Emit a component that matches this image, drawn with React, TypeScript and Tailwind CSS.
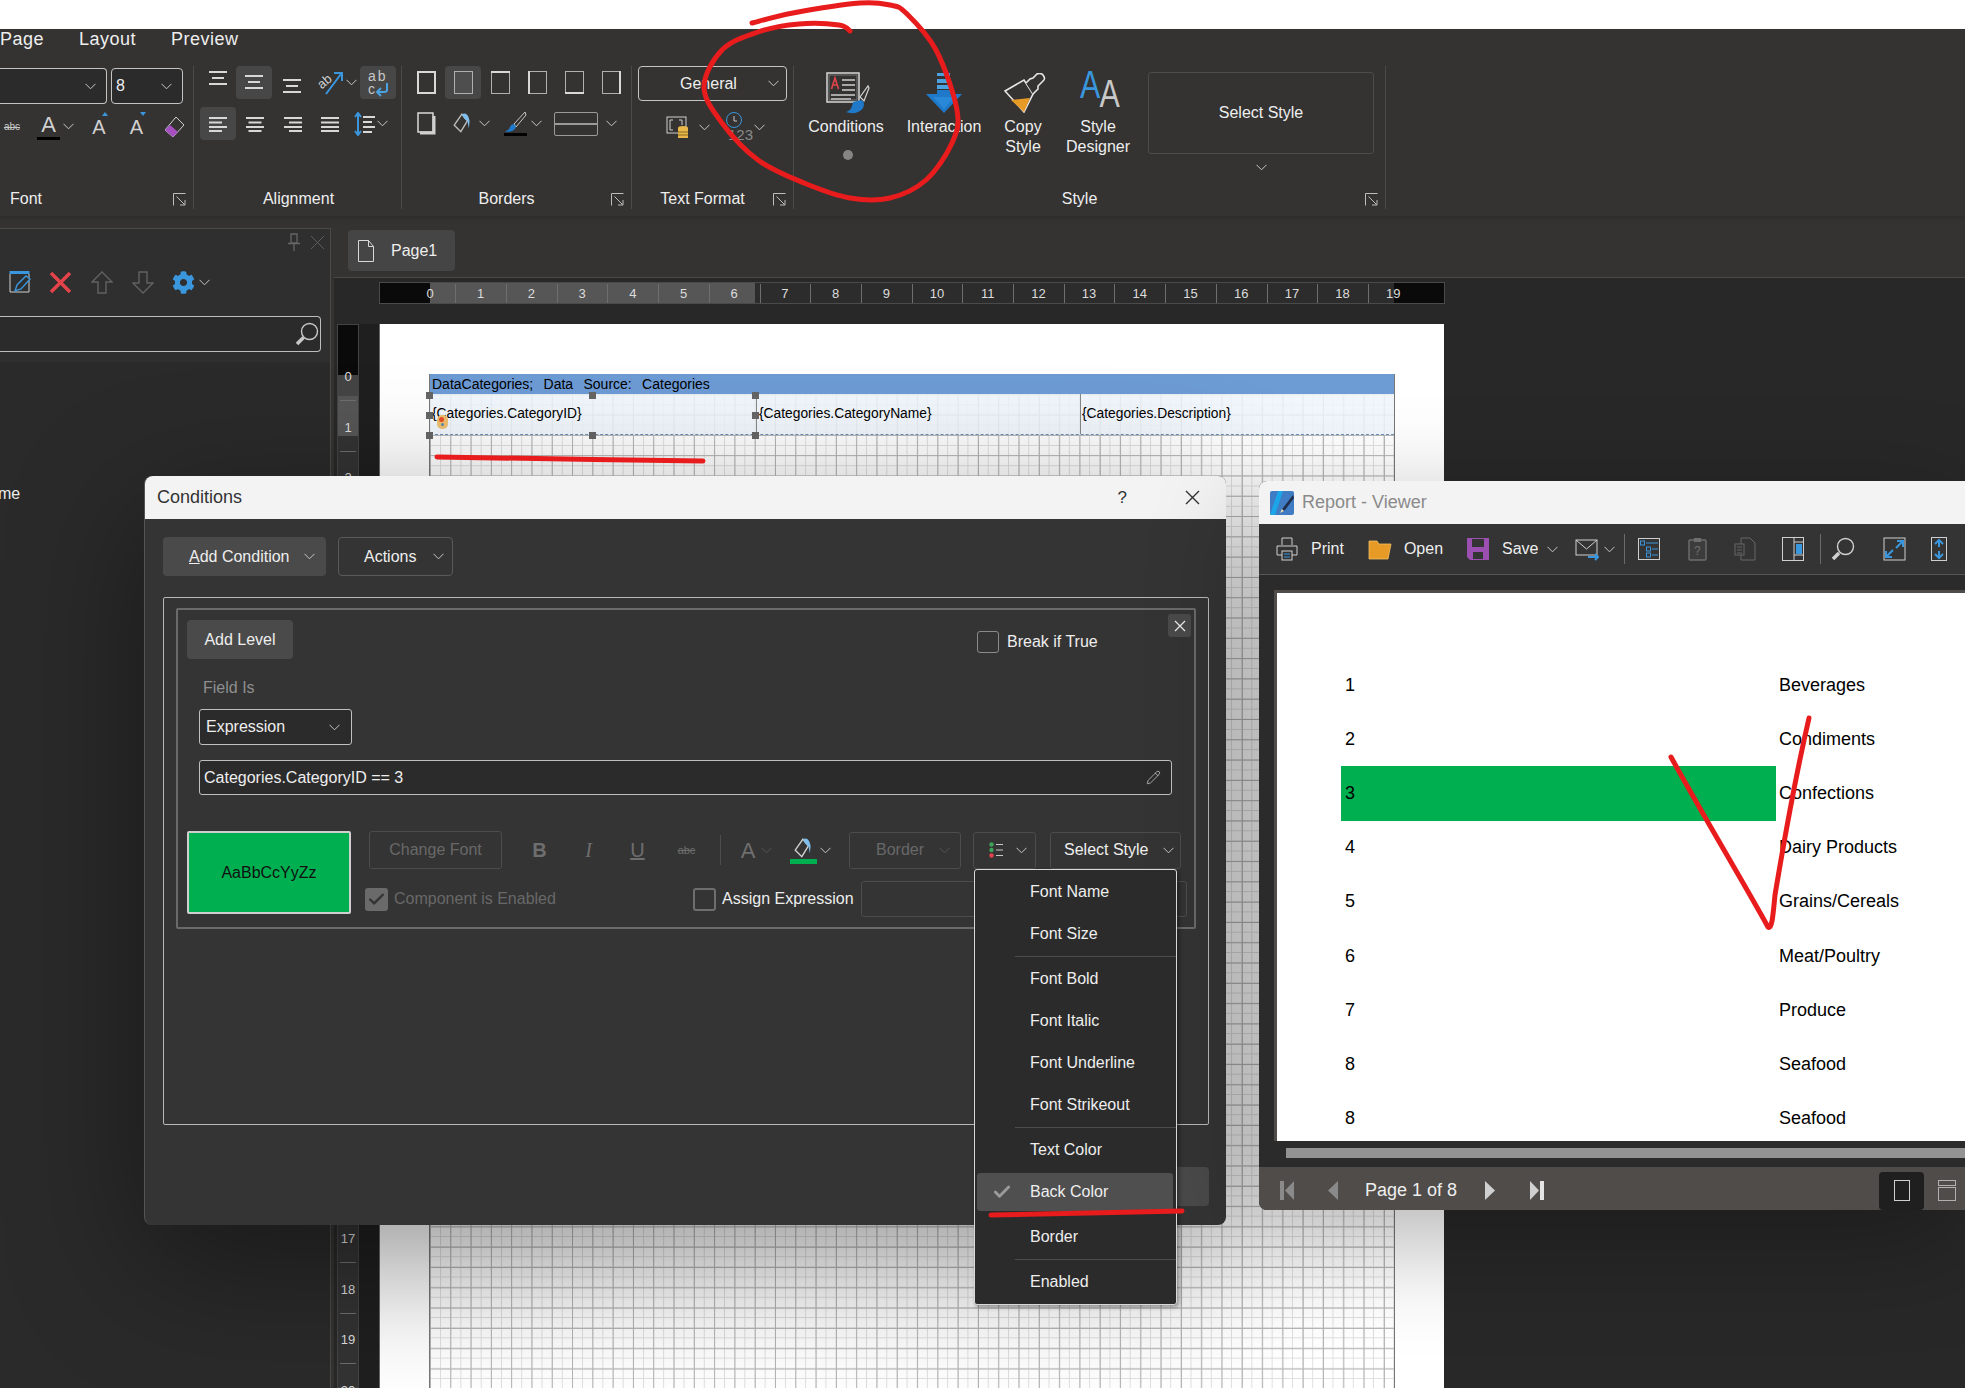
import React from 'react';
import { FaCog } from 'react-icons/fa';
import { Check, Pencil } from 'lucide-react';

const Chev = ({ c = '#c8c8c8', className = '' }: { c?: string; className?: string }) => (
  <svg width="11" height="7" viewBox="0 0 11 7" className={`shrink-0 ${className}`}>
    <path d="M0.5 0.8l5 5 5-5" fill="none" stroke={c} strokeWidth="1" />
  </svg>
);

const Launcher = () => (
  <svg width="13" height="13" viewBox="0 0 13 13" className="shrink-0">
    <path d="M0.5 12.5V0.5H12.5" fill="none" stroke="#bdbdbd" />
    <path d="M3.5 3.5l8 8M7 12h5V7" fill="none" stroke="#bdbdbd" />
  </svg>
);

const VAlign = ({ y }: { y: number }) => (
  <svg width="18" height="33" viewBox="0 0 18 33">
    <rect x="0" y={y} width="18" height="2" fill="#d8d8d8" />
    <rect x="3" y={y + 6} width="12" height="2" fill="#d8d8d8" />
    <rect x="0" y={y + 12} width="18" height="2" fill="#d8d8d8" />
  </svg>
);

const HAlign = ({ kind }: { kind: 'l' | 'c' | 'r' | 'j' }) => {
  const w = kind === 'j' ? 18 : 13;
  const x = kind === 'l' || kind === 'j' ? 0 : kind === 'c' ? 2.5 : 5;
  return (
    <svg width="18" height="16" viewBox="0 0 18 16">
      <rect x="0" y="1" width="18" height="2" fill="#d8d8d8" />
      <rect x={x} y="5.5" width={w} height="2" fill="#d8d8d8" />
      <rect x="0" y="10" width="18" height="2" fill="#d8d8d8" />
      <rect x={x} y="14" width={w} height="2" fill="#d8d8d8" />
    </svg>
  );
};

const BorderBox = ({ side }: { side: 'all' | 'none' | 't' | 'l' | 'b' | 'r' }) => {
  const strong = '#d8d8d8';
  const weak = '#b0b0b0';
  if (side === 'all') {
    return (
      <svg width="19" height="23" viewBox="0 0 19 23">
        <rect x="1" y="1" width="17" height="21" fill="none" stroke={strong} strokeWidth="2" />
      </svg>
    );
  }
  return (
    <svg width="19" height="23" viewBox="0 0 19 23">
      <rect x="0.5" y="0.5" width="18" height="22" fill={side === 'none' ? '#4e4e4e' : 'none'} stroke={weak} strokeWidth="1" />
      {side === 't' && <rect x="0" y="0" width="19" height="2" fill={strong} />}
      {side === 'b' && <rect x="0" y="21" width="19" height="2" fill={strong} />}
      {side === 'l' && <rect x="0" y="0" width="2" height="23" fill={strong} />}
      {side === 'r' && <rect x="17" y="0" width="2" height="23" fill={strong} />}
    </svg>
  );
};

const FillIcon = ({ dim = false }: { dim?: boolean }) => (
  <svg width="20" height="23" viewBox="0 0 18 21">
    <path d="M1 12L8 2l5 6-6 10z" fill="none" stroke={dim ? '#d0d0d0' : '#bdbdbd'} strokeWidth="1.3" />
    <path d="M8 2c4-2 6 1 7 6l-.6 7-1.2-6c-.6-2-2-1.6-3.2-3z" fill="#7fbdea" />
  </svg>
);

const Gear = () => <FaCog size={23} color="#3a96dd" />;

const BigConditions = () => (
  <svg width="44" height="43" viewBox="0 0 44 43">
    <rect x="1" y="1" width="32" height="29" fill="#343332" stroke="#d8d8d8" strokeWidth="1.5" />
    <rect x="3" y="3" width="28" height="25" fill="none" stroke="#777" />
    <path d="M5.5 17L9 6l3.5 11M7 13h4" fill="none" stroke="#e0444a" strokeWidth="1.6" />
    <path d="M16 8h13M16 13h13M16 18h13M5 23h24M5 27h20" stroke="#a8a8a8" strokeWidth="2" />
    <path d="M34 25l8-11 1 2-5 13z" fill="#343332" stroke="#d8d8d8" strokeWidth="1.2" />
    <path d="M27 30c4-1 7-3 10-1 2 3 1 9-5 11-4 2-9 1-12 0 4-1 6-4 7-10z" fill="#1f78c8" />
  </svg>
);

const BigInteraction = () => (
  <svg width="38" height="40" viewBox="0 0 38 40">
    <rect x="12" y="0" width="13" height="3" fill="#4aa3e0" />
    <rect x="12" y="6" width="13" height="4" fill="#4aa3e0" />
    <rect x="12" y="12" width="13" height="4" fill="#4aa3e0" />
    <path d="M12 17v4H1l18 19 18-19H25v-4z" fill="#1f78c8" />
    <path d="M8 24h22L19 36z" fill="#2a88d8" />
  </svg>
);

const BigCopy = () => (
  <svg width="42" height="40" viewBox="0 0 42 40">
    <path d="M1 18L20 7l9 14-9 18z" fill="none" stroke="#e6e6e6" strokeWidth="1.6" />
    <path d="M7 27l19-2-6 14z" fill="#e89a27" />
    <path d="M22 10l4-4 3-1 4-4c2-1 4-1 6 1 2 3 2 4 0 6l-5 5 0 3-5 5" fill="#343332" stroke="#e6e6e6" strokeWidth="1.6" />
  </svg>
);

const BigAA = () => (
  <svg width="40" height="40" viewBox="0 0 40 40" className="overflow-visible">
    <text x="0" y="25" fontSize="39" fill="#3a96dd" fontFamily="Liberation Sans" transform="scale(0.78 1)">A</text>
    <text x="25" y="34" fontSize="39" fill="#c8c8c8" fontFamily="Liberation Sans" transform="scale(0.78 1)">A</text>
  </svg>
);

const RibbonButton = ({ icon, lines, className, iconClass = '' }: { icon: React.ReactNode; lines: string[]; className: string; iconClass?: string }) => (
  <div className={`flex flex-col items-center shrink-0 ${className}`}>
    <div className={`h-[44px] mt-[5px] flex items-center justify-center ${iconClass}`}>{icon}</div>
    <div className="mt-[2px] text-center leading-[19.5px]">
      {lines.map((l) => (
        <div key={l}>{l}</div>
      ))}
    </div>
  </div>
);

const FontGroup = () => (
  <div className="w-[194px] shrink-0 flex flex-col border-r border-[#4a4a48]">
    <div className="flex gap-[4px] mt-[2px]">
      <div className="w-[107px] h-[36px] border border-l-0 border-[#c4c4c4] rounded-r-[4px] bg-[#2b2b2b] flex items-center justify-end pr-[10px]">
        <Chev />
      </div>
      <div className="w-[72px] h-[36px] border border-[#c4c4c4] rounded-[4px] bg-[#2b2b2b] flex items-center justify-between pl-[4px] pr-[10px]">
        <span>8</span>
        <Chev />
      </div>
    </div>
    <div className="flex items-center h-[33px] mt-[6px]">
      <div className="w-[24px] text-[10px] line-through text-[#c8c8c8] text-center">abc</div>
      <div className="w-[56px] flex items-center pl-[13px]">
        <div className="flex flex-col items-center w-[23px]">
          <span className="text-[22px] leading-[24px] text-[#d0d0d0]">A</span>
          <span className="h-[3px] w-[23px] bg-black" />
        </div>
        <Chev className="ml-[3px]" />
      </div>
      <div className="w-[38px] flex justify-center relative">
        <span className="text-[20px] text-[#d0d0d0]">A</span>
        <span className="absolute top-[0px] left-[22px] w-0 h-0 border-x-[3px] border-x-transparent border-b-[4px] border-b-[#3a96dd]" />
      </div>
      <div className="w-[37px] flex justify-center relative">
        <span className="text-[20px] text-[#d0d0d0]">A</span>
        <span className="absolute top-[0px] left-[22px] w-0 h-0 border-x-[3px] border-x-transparent border-t-[4px] border-t-[#3a96dd]" />
      </div>
      <div className="w-[37px] flex justify-center">
        <svg width="22" height="22" viewBox="0 0 22 22">
          <path d="M13 1l8 8-11 12-8-7z" fill="none" stroke="#d0d0d0" />
          <path d="M7 9l8 7-5 5-8-7z" fill="#a64fc0" />
        </svg>
      </div>
    </div>
    <div className="mt-auto h-[20px] flex items-center">
      <span className="flex-1 pl-[10px]">Font</span>
      <span className="mr-[7px]"><Launcher /></span>
    </div>
  </div>
);

const AlignmentGroup = () => (
  <div className="w-[208px] shrink-0 flex flex-col border-r border-[#4a4a48] pl-[6px]">
    <div className="flex h-[33px]">
      <div className="w-[36px] flex justify-center"><VAlign y={5} /></div>
      <div className="w-[36px] flex justify-center bg-[#474747] rounded-[4px]"><VAlign y={9} /></div>
      <div className="w-[40px] flex justify-center"><VAlign y={13} /></div>
      <div className="w-[48px] flex items-center pl-[7px]">
        <svg width="26" height="26" viewBox="0 0 26 26" className="overflow-visible">
          <text x="0" y="16" fontSize="13" fill="#d0d0d0" transform="rotate(-40 6 14)" fontFamily="Liberation Sans">ab</text>
          <path d="M7 24L22 4M15 3h8v8" fill="none" stroke="#3a96dd" strokeWidth="2" />
        </svg>
        <Chev className="ml-[1px]" />
      </div>
      <div className="w-[36px] bg-[#474747] rounded-[4px] flex items-center justify-center">
        <svg width="22" height="26" viewBox="0 0 22 26" className="overflow-visible">
          <text x="1" y="11" fontSize="14" letterSpacing="2" fill="#c8c8c8" fontFamily="Liberation Sans">ab</text>
          <text x="1" y="24" fontSize="14" fill="#c8c8c8" fontFamily="Liberation Sans">c</text>
          <path d="M20 13v7c0 2-2 2-3 2h-6M14 18l-4 4 4 4" fill="none" stroke="#4aa3e0" strokeWidth="2" />
        </svg>
      </div>
    </div>
    <div className="flex h-[33px] mt-[8px]">
      <div className="w-[36px] flex items-center justify-center bg-[#474747] rounded-[4px]"><HAlign kind="l" /></div>
      <div className="w-[38px] flex items-center justify-center"><HAlign kind="c" /></div>
      <div className="w-[37px] flex items-center justify-center"><HAlign kind="r" /></div>
      <div className="w-[37px] flex items-center justify-center"><HAlign kind="j" /></div>
      <div className="w-[48px] flex items-center pl-[6px]">
        <svg width="22" height="24" viewBox="0 0 22 24">
          <path d="M4 2v20M1 5l3-4 3 4M1 19l3 4 3-4" fill="none" stroke="#3a96dd" strokeWidth="2" />
          <path d="M9 5h12M9 10h9M9 15h12M9 20h9" stroke="#d8d8d8" strokeWidth="2" />
        </svg>
        <Chev className="ml-[1px]" />
      </div>
    </div>
    <div className="mt-auto h-[20px] flex items-center justify-center pr-[4px]">Alignment</div>
  </div>
);

const BordersGroup = () => (
  <div className="w-[230px] shrink-0 flex flex-col border-r border-[#4a4a48] pl-[6px]">
    <div className="flex h-[33px]">
      <div className="w-[37px] flex items-center justify-center"><BorderBox side="all" /></div>
      <div className="w-[36px] flex items-center justify-center bg-[#474747] rounded-[4px]"><BorderBox side="none" /></div>
      <div className="w-[38px] flex items-center justify-center"><BorderBox side="t" /></div>
      <div className="w-[37px] flex items-center justify-center"><BorderBox side="l" /></div>
      <div className="w-[37px] flex items-center justify-center"><BorderBox side="b" /></div>
      <div className="w-[37px] flex items-center justify-center"><BorderBox side="r" /></div>
    </div>
    <div className="flex h-[33px] mt-[8px] items-center">
      <div className="w-[36px] flex justify-center">
        <svg width="19" height="23" viewBox="0 0 19 23">
          <rect x="1" y="1" width="15" height="19" fill="none" stroke="#e4e4e4" strokeWidth="1.4" />
          <path d="M17 4v17H3" fill="none" stroke="#d0d0d0" strokeWidth="3" />
        </svg>
      </div>
      <div className="w-[51px] flex items-center justify-end pr-[5px] gap-[6px]">
        <FillIcon />
        <Chev />
      </div>
      <div className="w-[51px] flex items-center justify-end pr-[4px] gap-[4px]">
        <div className="flex flex-col items-center">
          <svg width="24" height="22" viewBox="0 0 24 22">
            <path d="M22 1L11 13l2 3L23 4z" fill="#343332" stroke="#c8c8c8" />
            <path d="M11 13c-3 0-4 3-5 5l-4 3c5 0 10-1 11-5z" fill="#1f78c8" />
          </svg>
          <span className="w-[23px] h-[3px] bg-black" />
        </div>
        <Chev />
      </div>
      <div className="ml-[8px] w-[44px] h-[24px] border border-[#9a9a9a] rounded-[2px] flex items-center">
        <span className="w-full h-[2px] bg-[#9a9a9a]" />
      </div>
      <Chev className="ml-[8px]" />
    </div>
    <div className="mt-auto h-[20px] flex items-center -ml-[6px]">
      <span className="flex-1 text-center">Borders</span>
      <span className="mr-[7px]"><Launcher /></span>
    </div>
  </div>
);

const DbField = () => (
  <svg width="24" height="26" viewBox="0 0 24 26">
    <rect x="1" y="3" width="19" height="16" fill="none" stroke="#d0d0d0" />
    <path d="M7 6H4v10h3M13 6h3v5" fill="none" stroke="#d0d0d0" />
    <ellipse cx="17" cy="14" rx="5" ry="2" fill="#e8b84a" />
    <rect x="12" y="14" width="10" height="10" fill="#e8b84a" />
    <path d="M12 18h10M12 21h10" stroke="#8a6a20" />
  </svg>
);

const TextFormatGroup = () => (
  <div className="w-[162px] shrink-0 flex flex-col border-r border-[#4a4a48] pl-[6px]">
    <div className="w-[149px] h-[35px] border border-[#c4c4c4] rounded-[4px] flex items-center pl-[41px] pr-[7px] justify-between">
      <span>General</span>
      <Chev />
    </div>
    <div className="flex items-center mt-[11px] h-[30px] pl-[28px]">
      <DbField />
      <Chev className="ml-[9px]" />
      <svg width="26" height="30" viewBox="0 0 26 30" className="ml-[15px] overflow-visible">
        <circle cx="9" cy="8" r="7.5" fill="none" stroke="#3a96dd" />
        <path d="M9 4v5h3" fill="none" stroke="#c8c8c8" />
        <text x="3" y="28" fontSize="15" fill="#8a8a8a" fontFamily="Liberation Sans">123</text>
      </svg>
      <Chev className="ml-[3px]" />
    </div>
    <div className="mt-auto h-[20px] flex items-center -ml-[6px]">
      <span className="flex-1 text-center">Text Format</span>
      <span className="mr-[7px]"><Launcher /></span>
    </div>
  </div>
);

const StyleGroup = () => (
  <div className="w-[592px] shrink-0 flex flex-col border-r border-[#4a4a48]">
    <div className="flex">
      <div className="flex flex-col items-center w-[78px] ml-[13px]">
        <RibbonButton icon={<BigConditions />} lines={['Conditions']} className="w-[78px]" iconClass="pl-[4px]" />
        <span className="w-[10px] h-[10px] rounded-full bg-[#858585] mt-[13px] ml-[3px]" />
      </div>
      <RibbonButton icon={<BigInteraction />} lines={['Interaction']} className="w-[78px] ml-[20px]" />
      <RibbonButton icon={<BigCopy />} lines={['Copy', 'Style']} className="w-[60px] ml-[10px]" iconClass="pl-[4px]" />
      <RibbonButton icon={<BigAA />} lines={['Style', 'Designer']} className="w-[76px] ml-[7px]" iconClass="pl-[4px]" />
      <div className="ml-[12px] flex flex-col items-center">
        <div className="w-[226px] h-[82px] mt-[6px] border border-[#4c4c4c] rounded-[3px] flex items-center justify-center">
          Select Style
        </div>
        <Chev className="mt-[10px]" />
      </div>
    </div>
    <div className="mt-auto h-[20px] flex items-center">
      <span className="flex-1 text-center">Style</span>
      <span className="mr-[7px]"><Launcher /></span>
    </div>
  </div>
);

const Ribbon = () => (
  <div className="h-[187px] bg-[#343332] text-[#eeeeee] text-[16px] shadow-[0_2px_4px_rgba(0,0,0,0.15)] relative z-10">
    <div className="flex h-[21px] items-center text-[18px] tracking-[0.5px]">
      <span className="w-[79px]">Page</span>
      <span className="w-[92px]">Layout</span>
      <span>Preview</span>
    </div>
    <div className="flex h-[143px] mt-[16px]">
      <FontGroup />
      <AlignmentGroup />
      <BordersGroup />
      <TextFormatGroup />
      <StyleGroup />
    </div>
  </div>
);

const LeftPanel = () => (
  <div className="w-[334px] shrink-0 bg-[#343332] pt-[12px] flex flex-col">
    <div className="w-[331px] flex-1 border-t border-r border-[#4a4a48] bg-[#2f2f2f] flex flex-col">
      <div className="flex justify-end items-center h-[26px] pr-[5px] gap-[10px]">
        <svg width="12" height="18" viewBox="0 0 12 18">
          <path d="M3 1h6v9H3zM0 10.5h12M6 11v7" fill="none" stroke="#666" strokeWidth="1.3" />
        </svg>
        <svg width="15" height="15" viewBox="0 0 15 15">
          <path d="M1 1l13 13M14 1L1 14" stroke="#5c5c5c" />
        </svg>
      </div>
      <div className="flex items-center h-[38px] mt-[8px] pl-[8px]">
        <div className="w-[24px] flex justify-center">
          <svg width="22" height="24" viewBox="0 0 22 24">
            <path d="M1 4v18h19V4" fill="none" stroke="#d0d0d0" />
            <rect x="0.5" y="1" width="20" height="3" fill="#3a96dd" />
            <path d="M6 21l2-6L17 6l4 3-9 10z" fill="#2e2e2e" stroke="#3a96dd" strokeWidth="1.4" />
          </svg>
        </div>
        <div className="w-[41px] ml-[8px] flex justify-center">
          <svg width="23" height="23" viewBox="0 0 23 23">
            <path d="M2 2l19 19M21 2L2 21" stroke="#e5434a" strokeWidth="3.5" />
          </svg>
        </div>
        <div className="w-[41px] flex justify-center">
          <svg width="22" height="23" viewBox="0 0 22 23">
            <path d="M11 1L1 11h6v11h8V11h6z" fill="none" stroke="#626262" strokeWidth="1.4" />
          </svg>
        </div>
        <div className="w-[41px] flex justify-center">
          <svg width="22" height="23" viewBox="0 0 22 23">
            <path d="M11 22L1 12h6V1h8v11h6z" fill="none" stroke="#626262" strokeWidth="1.4" />
          </svg>
        </div>
        <div className="ml-[9px] flex items-center gap-[4px]">
          <Gear />
          <Chev />
        </div>
      </div>
      <div className="h-[36px] w-[321px] mt-[15px] border border-l-0 border-[#bdbdbd] rounded-r-[4px] bg-[#2b2b2b] flex items-center justify-end pr-[1px]">
        <svg width="24" height="24" viewBox="0 0 24 24">
          <circle cx="14.5" cy="9.5" r="8" fill="none" stroke="#c8c8c8" strokeWidth="1.4" />
          <path d="M8.5 15.5L2 22" stroke="#c8c8c8" strokeWidth="3.5" />
        </svg>
      </div>
      <div className="flex-1 mt-[10px] bg-[#2a2a2a] text-[#eeeeee] text-[16px] pt-[122px]">
        <div className="-ml-[2px] leading-[20px]">me</div>
      </div>
    </div>
  </div>
);

const H_LABELS = Array.from({ length: 20 }, (_, i) => i);
// the dialog hides 3..16 anyway
const V_LABELS = [0, 1, 2, 17, 18, 19, 20];

const HRuler = () => (
  <div className="relative w-[1066px] h-[22px] ml-[45px] mt-[4px] border border-[#4a4a4a] flex text-[13px] text-[#dddddd]">
    <div className="w-[50px] bg-[#0a0a0a]" />
    <div className="w-[325px] bg-[#565656]" />
    <div className="flex-1 bg-[#2c2c2c]" />
    <div className="w-[50px] bg-[#0a0a0a]" />
    {H_LABELS.map((n) => (
      <React.Fragment key={n}>
        <span
          className="absolute top-[2px] -translate-x-1/2 leading-[18px]"
          style={{ left: 50 + n * 50.7 }}
        >
          {n}
        </span>
        {n < 19 && (
          <span
            className="absolute top-[1px] h-[19px] w-px bg-[#6e6e6e]"
            style={{ left: 75.3 + n * 50.7 }}
          />
        )}
      </React.Fragment>
    ))}
  </div>
);

const VRuler = () => (
  <div className="relative w-[22px] h-[1064px] ml-[3px] shrink-0 border border-[#444] bg-[#333] text-[13px] text-[#dddddd]">
    <div className="h-[50px] bg-[#0a0a0a]" />
    <div className="h-[21px] bg-[#444]" />
    <div className="h-[40px] bg-[#565656]" />
    {V_LABELS.map((n) => (
      <React.Fragment key={n}>
        <span
          className="absolute left-0 w-full text-center -translate-y-1/2 leading-[16px]"
          style={{ top: 52 + n * 50.7 }}
        >
          {n}
        </span>
        <span
          className="absolute left-[2px] right-[2px] h-px bg-[#6e6e6e]"
          style={{ top: 75 + n * 50.7 }}
        />
      </React.Fragment>
    ))}
  </div>
);

const Handle = ({ className }: { className: string }) => (
  <span className={`absolute w-[7px] h-[7px] bg-[#666666] ${className}`} />
);

const DesignPage = () => (
  <div className="relative w-[1065px] h-[1064px] bg-white pt-[50px] pl-[49px] border-l border-[#666]">
    <div className="relative w-[966px] h-[1014px] border-l border-r border-[#777] bg-[linear-gradient(to_right,#b4b4b4_1px,transparent_1px),linear-gradient(to_bottom,#b4b4b4_1px,transparent_1px),linear-gradient(to_right,#dedede_1px,transparent_1px),linear-gradient(to_bottom,#dedede_1px,transparent_1px)] bg-[size:20.3px_20.3px,20.3px_20.3px,10.15px_10.15px,10.15px_10.15px]">
      <div className="h-[20px] bg-[#6d9bd4] text-black text-[14px] leading-[20px] pl-[2px] whitespace-pre [word-spacing:1.3px]">
        DataCategories;  Data  Source:  Categories
      </div>
      <div className="h-[41px] bg-[#eef6fc]/85 border-b border-dashed border-[#6d8fb5] flex text-black text-[13.8px] items-center">
        <div className="w-[326px] pl-[2px]">{'{Categories.CategoryID}'}</div>
        <div className="w-[324px] h-full border-l border-[#888] pl-[2px] flex items-center">{'{Categories.CategoryName}'}</div>
        <div className="flex-1 h-full border-l border-[#888] pl-[1px] flex items-center">{'{Categories.Description}'}</div>
      </div>
      <span className="absolute left-[7px] top-[41px] w-[11px] h-[14px] rounded-[5px] bg-[#f0c070]">
        <span className="absolute left-[2px] top-[2px] w-[5px] h-[5px] rounded-full bg-[#e8502a]" />
        <span className="absolute left-[4px] top-[8px] w-[3px] h-[3px] rounded-full bg-[#5a8ab0]" />
      </span>
      <Handle className="left-[-4px] top-[18px]" />
      <Handle className="left-[159px] top-[18px]" />
      <Handle className="left-[322px] top-[18px]" />
      <Handle className="left-[-4px] top-[38px]" />
      <Handle className="left-[322px] top-[38px]" />
      <Handle className="left-[-4px] top-[58px]" />
      <Handle className="left-[159px] top-[58px]" />
      <Handle className="left-[322px] top-[58px]" />
    </div>
  </div>
);

const DesignArea = () => (
  <div className="flex-1 min-w-0 flex flex-col">
    <div className="h-[62px] bg-[#343332] border-b border-[#4a4a4a] pl-[14px] pt-[14px] shrink-0">
      <div className="w-[107px] h-[41px] bg-[#454545] rounded-[4px] flex items-center pl-[10px] text-[16px] text-[#eeeeee]">
        <svg width="16" height="22" viewBox="0 0 16 22">
          <path d="M0.5 0.5h10l5 6v15H0.5zM10.5 0.5v6h5" fill="none" stroke="#d8d8d8" />
        </svg>
        <span className="ml-[17px]">Page1</span>
      </div>
    </div>
    <div className="flex-1 bg-[#282828] min-h-0">
      <HRuler />
      <div className="flex mt-[20px]">
        <VRuler />
        <div className="w-[20px] shrink-0 bg-[#1f1f1f]" />
        <DesignPage />
      </div>
    </div>
  </div>
);

const MENU: (string | null)[] = [
  'Font Name',
  'Font Size',
  null,
  'Font Bold',
  'Font Italic',
  'Font Underline',
  'Font Strikeout',
  null,
  'Text Color',
  'Back Color',
  '',
  'Border',
  null,
  'Enabled',
];

const ConditionMenu = () => (
  <div className="absolute left-[974px] top-[869px] w-[203px] h-[436px] bg-[#2b2b2b] border border-[#d8d8d8] rounded-[3px] pt-[1px] text-[16px] text-[#eeeeee] shadow-[2px_2px_4px_rgba(0,0,0,0.4)] z-30">
    {MENU.map((m, i) => {
      if (m === null) {
        return (
          <div key={i} className="h-[3px] flex items-center pl-[40px]">
            <span className="w-full h-px bg-[#4c4c4c]" />
          </div>
        );
      }
      if (m === '') return <div key={i} className="h-[3px]" />;
      const on = m === 'Back Color';
      return (
        <div key={m} className="h-[42px] py-[2px] pl-[2px] pr-[3px]">
          <div className={`h-[38px] flex items-center rounded-[3px] ${on ? 'bg-[#4f4f4f]' : ''}`}>
            <div className="w-[53px] flex justify-center pr-[4px]">
              {on && <Check size={20} strokeWidth={3.5} color="#9a9a9a" />}
            </div>
            <span>{m}</span>
          </div>
        </div>
      );
    })}
  </div>
);

const ConditionsDialog = () => (
  <div className="absolute left-[144px] top-[476px] w-[1082px] h-[749px] rounded-[8px] bg-[#343434] shadow-[0_38px_134px_rgba(0,0,0,0.42)] z-20 flex flex-col text-[16px] text-[#eeeeee] border-l border-[#555]">
    <div className="h-[43px] shrink-0 bg-[#f3f3f3] rounded-t-[8px] flex items-center pl-[12px] pr-[25px] text-[#333333] text-[18px]">
      <span>Conditions</span>
      <span className="ml-auto mr-[57px] text-[17px]">?</span>
      <svg width="17" height="17" viewBox="0 0 17 17">
        <path d="M2 2l13 13M15 2L2 15" stroke="#333" strokeWidth="1.4" />
      </svg>
    </div>
    <div className="flex flex-col pl-[18px]">
      <div className="flex mt-[18px] gap-[12px]">
        <div className="w-[163px] h-[39px] bg-[#4a4a4a] rounded-[4px] flex items-center justify-between pl-[26px] pr-[11px]">
          <span><span className="underline">A</span>dd Condition</span>
          <Chev />
        </div>
        <div className="w-[115px] h-[39px] border border-[#5a5a5a] rounded-[4px] flex items-center justify-between pl-[25px] pr-[8px]">
          <span>Actions</span>
          <Chev />
        </div>
      </div>
      <div className="w-[1046px] h-[528px] mt-[21px] border border-[#b8b8b8] rounded-[2px] pl-[12px] pt-[10px]">
        <div className="w-[1020px] h-[321px] border-2 border-[#6a6a6a] rounded-[2px] flex flex-col">
          <div className="flex pl-[9px] pt-[4px] h-[50px] items-start">
            <div className="w-[106px] h-[39px] mt-[6px] bg-[#4a4a4a] rounded-[4px] flex items-center justify-center">Add Level</div>
            <div className="ml-[684px] mt-[16px] flex items-center">
              <span className="w-[22px] h-[22px] border border-[#8a8a8a] rounded-[3px]" />
              <span className="ml-[8px]">Break if True</span>
            </div>
            <div className="ml-auto mr-[3px] w-[23px] h-[23px] bg-[#4a4a4a] rounded-[3px] flex items-center justify-center">
              <svg width="12" height="12" viewBox="0 0 12 12">
                <path d="M1 1l10 10M11 1L1 11" stroke="#eee" strokeWidth="1.2" />
              </svg>
            </div>
          </div>
          <div className="pl-[25px] mt-[18px] h-[20px] leading-[20px] text-[#8e8e8e]">Field Is</div>
          <div className="ml-[21px] mt-[11px] w-[153px] h-[36px] bg-[#2b2b2b] border border-[#c0c0c0] rounded-[3px] flex items-center justify-between pl-[6px] pr-[11px]">
            <span>Expression</span>
            <Chev />
          </div>
          <div className="ml-[21px] mt-[15px] w-[973px] h-[35px] bg-[#2b2b2b] border border-[#c0c0c0] rounded-[3px] flex items-center justify-between pl-[4px] pr-[10px]">
            <span>Categories.CategoryID == 3</span>
            <Pencil size={15} strokeWidth={1.2} color="#d0d0d0" />
          </div>
          <div className="flex mt-[36px] pl-[9px]">
            <div className="w-[164px] h-[83px] bg-[#00b050] border-2 border-[#cfcfcf] rounded-[2px] flex items-center justify-center text-[#111111]">
              AaBbCcYyZz
            </div>
            <div className="ml-[18px] flex flex-col">
              <div className="flex items-center h-[38px]">
                <div className="w-[133px] h-[38px] border border-[#4c4c4c] rounded-[3px] flex items-center justify-center text-[#686868]">Change Font</div>
                <span className="ml-[13px] w-[49px] text-center text-[20px] font-bold text-[#6e6e6e]">B</span>
                <span className="w-[49px] text-center text-[20px] italic text-[#6e6e6e] [font-family:'Liberation_Serif']">I</span>
                <span className="w-[49px] text-center text-[20px] underline text-[#6e6e6e]">U</span>
                <span className="w-[49px] text-center text-[11px] line-through text-[#6e6e6e]">abc</span>
                <span className="ml-[9px] w-px h-[30px] bg-[#4c4c4c]" />
                <span className="ml-[17px] text-[22px] text-[#6e6e6e] w-[20px] text-center">A</span>
                <Chev c="#555" className="ml-[3px]" />
                <div className="ml-[18px] flex flex-col items-center w-[27px]">
                  <FillIcon dim />
                  <span className="w-[27px] h-[5px] bg-[#00b050] -mt-[1px]" />
                </div>
                <Chev className="ml-[3px]" />
                <div className="ml-[18px] w-[112px] h-[37px] border border-[#4c4c4c] rounded-[3px] flex items-center text-[#686868] pl-[26px] pr-[10px] justify-between">
                  <span>Border</span>
                  <Chev c="#555" />
                </div>
                <div className="ml-[12px] w-[63px] h-[37px] border border-[#4c4c4c] rounded-[3px] flex items-center pl-[15px] pr-[8px] justify-between">
                  <svg width="14" height="16" viewBox="0 0 14 16">
                    <circle cx="2.5" cy="2.5" r="2.2" fill="#3da35a" />
                    <circle cx="2.5" cy="8" r="2.2" fill="#3da35a" />
                    <circle cx="2.5" cy="13.5" r="2.2" fill="#e5434a" />
                    <path d="M7 2.5h7M7 8h7M7 13.5h7" stroke="#c8c8c8" />
                  </svg>
                  <Chev />
                </div>
                <div className="ml-[14px] w-[131px] h-[37px] border border-[#4c4c4c] rounded-[3px] flex items-center pl-[13px] pr-[6px] justify-between">
                  <span>Select Style</span>
                  <Chev />
                </div>
              </div>
              <div className="flex items-center h-[36px] mt-[12px] -ml-[4px]">
                <span className="w-[23px] h-[23px] bg-[#6a6a6a] rounded-[3px] flex items-center justify-center">
                  <Check size={19} strokeWidth={3} color="#333333" />
                </span>
                <span className="ml-[6px] w-[299px] text-[#686868]">Component is Enabled</span>
                <span className="w-[23px] h-[23px] border-2 border-[#6e6e6e] rounded-[3px]" />
                <span className="ml-[6px] w-[139px]">Assign Expression</span>
                <div className="w-[326px] h-[36px] border border-[#4c4c4c] rounded-[3px]" />
              </div>
            </div>
          </div>
        </div>
      </div>
      <div className="w-[1046px] mt-[42px] flex justify-end">
        <div className="w-[110px] h-[39px] bg-[#4a4a4a] rounded-[4px]" />
      </div>
    </div>
  </div>
);

const ViewerIcon = ({ children }: { children: React.ReactNode }) => (
  <svg width="24" height="24" viewBox="0 0 24 24" className="shrink-0">{children}</svg>
);

const REPORT_ROWS = [
  ['1', 'Beverages'],
  ['2', 'Condiments'],
  ['3', 'Confections'],
  ['4', 'Dairy Products'],
  ['5', 'Grains/Cereals'],
  ['6', 'Meat/Poultry'],
  ['7', 'Produce'],
  ['8', 'Seafood'],
  ['8', 'Seafood'],
];

const ViewerWindow = () => (
  <div className="absolute left-[1259px] top-[481px] w-[706px] h-[729px] rounded-l-[8px] bg-[#2b2b2b] shadow-[0_30px_110px_rgba(0,0,0,0.3)] z-20 flex flex-col text-[16px] text-[#eeeeee] overflow-hidden">
    <div className="h-[43px] shrink-0 bg-[#f3f3f3] flex items-center pl-[11px] text-[#8a8a8a] text-[18px]">
      <svg width="24" height="24" viewBox="0 0 24 24">
        <rect width="24" height="24" rx="2" fill="#3f7cc4" />
        <path d="M0 24L8 0h5L5 24z" fill="#1aa6e8" />
        <path d="M23 4L13 17l-3 5 5-3L24 7z" fill="#1f2d4a" />
        <path d="M10 22l2-4 2 2z" fill="#f0e0c0" />
      </svg>
      <span className="ml-[8px]">Report - Viewer</span>
    </div>
    <div className="h-[51px] shrink-0 bg-[#343434] border-b border-[#555] flex items-center pl-[16px]">
      <ViewerIcon>
        <path d="M7 8V1h10v7M2 18V9h20v9h-5M2 18h5" fill="none" stroke="#cfcfcf" />
        <rect x="7" y="14" width="10" height="9" fill="#343434" stroke="#cfcfcf" />
        <path d="M9 17h6M9 20h6" stroke="#3a96dd" />
      </ViewerIcon>
      <span className="ml-[12px]">Print</span>
      <div className="ml-[24px]">
        <ViewerIcon>
          <path d="M1 4h8l2 3 12 0-3 15H1z" fill="#e89a27" stroke="#f0c060" strokeWidth="0.8" />
        </ViewerIcon>
      </div>
      <span className="ml-[12px]">Open</span>
      <div className="ml-[23px]">
        <ViewerIcon>
          <path d="M1 1h22v22H4l-3-3z" fill="#9b4fb0" />
          <rect x="6" y="2" width="12" height="8" fill="#343434" />
          <rect x="7" y="15" width="10" height="7" fill="#343434" />
        </ViewerIcon>
      </div>
      <span className="ml-[12px]">Save</span>
      <Chev className="ml-[8px]" />
      <div className="ml-[17px]">
        <ViewerIcon>
          <rect x="1" y="3" width="21" height="15" fill="none" stroke="#cfcfcf" />
          <path d="M1 3l10.5 9L22 3" fill="none" stroke="#cfcfcf" />
          <path d="M13 20h10M20 17l3 3-3 3" fill="none" stroke="#3a96dd" strokeWidth="2" />
        </ViewerIcon>
      </div>
      <Chev className="ml-[5px]" />
      <span className="ml-[9px] w-px h-[30px] bg-[#6a6a6a]" />
      <div className="ml-[13px] w-[24px]">
        <svg width="22" height="22" viewBox="0 0 22 22">
          <rect x="0.5" y="0.5" width="21" height="21" fill="none" stroke="#cfcfcf" />
          <rect x="2.5" y="3" width="4" height="4" fill="none" stroke="#3a96dd" />
          <rect x="8.5" y="9" width="4" height="4" fill="none" stroke="#3a96dd" />
          <rect x="8.5" y="15" width="4" height="4" fill="none" stroke="#3a96dd" />
          <path d="M8 5h12M14 11h6M14 17h6" stroke="#3a96dd" />
        </svg>
      </div>
      <div className="ml-[26px] w-[20px]">
        <svg width="20" height="24" viewBox="0 0 20 24" className="overflow-visible">
          <rect x="1" y="3" width="17" height="20" rx="1" fill="#3c3c3c" stroke="#6e6e6e" strokeWidth="1.4" />
          <rect x="6" y="1" width="7" height="4" fill="#6e6e6e" />
          <text x="6" y="18" fontSize="12" fill="#6e6e6e" fontFamily="Liberation Sans">?</text>
        </svg>
      </div>
      <div className="ml-[26px] w-[22px]">
        <svg width="22" height="24" viewBox="0 0 22 24">
          <path d="M7 1h9l5 5v17H7z" fill="none" stroke="#666" />
          <rect x="1" y="7" width="9" height="11" fill="#343434" stroke="#666" />
          <path d="M3 10h5M3 13h5M3 16h5" stroke="#666" />
        </svg>
      </div>
      <div className="ml-[26px] w-[22px]">
        <svg width="22" height="24" viewBox="0 0 22 24">
          <rect x="0.5" y="0.5" width="21" height="23" fill="none" stroke="#cfcfcf" />
          <path d="M12 0v24M12 5h10M12 18h10" stroke="#cfcfcf" />
          <rect x="14" y="7" width="6" height="10" fill="#3a96dd" />
        </svg>
      </div>
      <span className="ml-[16px] w-px h-[30px] bg-[#6a6a6a]" />
      <div className="ml-[10px]">
        <ViewerIcon>
          <circle cx="14.5" cy="9.5" r="8" fill="none" stroke="#d0d0d0" strokeWidth="1.4" />
          <path d="M8 16l-6 6" stroke="#d0d0d0" strokeWidth="3.5" />
        </ViewerIcon>
      </div>
      <div className="ml-[28px]">
        <ViewerIcon>
          <rect x="1" y="1" width="21" height="22" fill="none" stroke="#cfcfcf" />
          <path d="M13 11l6-6M14 4h6v6M10 13l-6 6M3 14v6h6" fill="none" stroke="#3a96dd" strokeWidth="2" />
        </ViewerIcon>
      </div>
      <div className="ml-[24px]">
        <svg width="16" height="24" viewBox="0 0 16 24">
          <rect x="0.5" y="0.5" width="15" height="23" fill="none" stroke="#cfcfcf" />
          <path d="M8 4v6M4 7l4-4 4 4M8 14v6M4 17l4 4 4-4" fill="none" stroke="#3a96dd" strokeWidth="2" />
        </svg>
      </div>
    </div>
    <div className="pl-[15px] pt-[15px] shrink-0">
      <div className="h-[551px] border-t-[3px] border-l-[3px] border-[#4f4c49] bg-white text-black text-[18px] pt-[65px] overflow-hidden">
        {REPORT_ROWS.map(([n, name], i) => (
          <div key={i} className="h-[54.2px] flex items-center pl-[64px]">
            <div className={`w-[435px] h-full pl-[4px] flex items-center ${n === '3' ? 'bg-[#00b050]' : ''}`}>{n}</div>
            <div className="pl-[3px]">{name}</div>
          </div>
        ))}
      </div>
    </div>
    <div className="h-[10px] mt-[7px] ml-[27px] bg-[#939393] shrink-0" />
    <div className="h-[43px] mt-[9px] shrink-0 bg-[#4f4c49] flex items-center pl-[21px] pt-[4px] text-[18px]">
      <svg width="14" height="19" viewBox="0 0 14 19">
        <rect width="4" height="19" fill="#8a8a8a" />
        <path d="M14 0v19L5 9.5z" fill="#8a8a8a" />
      </svg>
      <svg width="10" height="19" viewBox="0 0 10 19" className="ml-[34px]">
        <path d="M10 0v19L0 9.5z" fill="#8a8a8a" />
      </svg>
      <span className="ml-[27px]">Page 1 of 8</span>
      <svg width="10" height="19" viewBox="0 0 10 19" className="ml-[28px]">
        <path d="M0 0v19L10 9.5z" fill="#d0d0d0" />
      </svg>
      <svg width="14" height="19" viewBox="0 0 14 19" className="ml-[35px]">
        <path d="M0 0v19L9 9.5z" fill="#d0d0d0" />
        <rect x="10" width="4" height="19" fill="#e4e4e4" />
      </svg>
      <div className="ml-auto w-[45px] h-[38px] bg-[#1f1f1f] rounded-[4px] flex items-center justify-center">
        <span className="w-[16px] h-[21px] border border-[#cfcfcf]" />
      </div>
      <div className="ml-[14px] mr-[9px] flex flex-col w-[18px] gap-[1px]">
        <span className="h-[6px] border border-[#b0b0b0]" />
        <span className="h-[14px] border border-[#b0b0b0]" />
      </div>
    </div>
  </div>
);

// smooth pen stroke through hand-picked points
const smooth = (p: number[][]) => {
  let d = `M${p[0][0]} ${p[0][1]}`;
  for (let i = 0; i < p.length - 1; i++) {
    const a = p[Math.max(i - 1, 0)];
    const b = p[i];
    const c = p[i + 1];
    const e = p[Math.min(i + 2, p.length - 1)];
    d += `C${b[0] + (c[0] - a[0]) / 6} ${b[1] + (c[1] - a[1]) / 6} ${c[0] - (e[0] - b[0]) / 6} ${c[1] - (e[1] - b[1]) / 6} ${c[0]} ${c[1]}`;
  }
  return d;
};

const CIRCLE = [
  [752, 23], [793, 13], [860, 3], [890, 5], [906, 13], [936, 50], [957, 110], [952, 143],
  [926, 180], [890, 198], [850, 198], [804, 183], [758, 160], [722, 123], [704, 87],
  [722, 50], [758, 32], [799, 24], [839, 25], [850, 31],
];

const RedInk = () => (
  <svg
    width="1965"
    height="1388"
    viewBox="0 0 1965 1388"
    className="absolute left-0 top-0 pointer-events-none z-40"
  >
    <g fill="none" stroke="#e81c1c" strokeWidth="5" strokeLinecap="round" strokeLinejoin="round">
      <path d={smooth(CIRCLE)} />
      <path d="M437 457C500 458 620 460 703 461" />
      <path d="M1671 757C1700 810 1745 885 1768 927C1772 930 1773 915 1775 895C1785 835 1797 770 1809 718" />
      <path d="M991 1215C1050 1214 1120 1212 1182 1211" />
    </g>
  </svg>
);

export default function App() {
  return (
    <div className="relative w-[1965px] h-[1388px] overflow-hidden bg-white font-['Liberation_Sans',Arial,sans-serif]">
      <div className="h-[29px] bg-white" />
      <Ribbon />
      <div className="flex h-[1172px]">
        <LeftPanel />
        <DesignArea />
      </div>
      <ConditionsDialog />
      <ConditionMenu />
      <ViewerWindow />
      <RedInk />
    </div>
  );
}
